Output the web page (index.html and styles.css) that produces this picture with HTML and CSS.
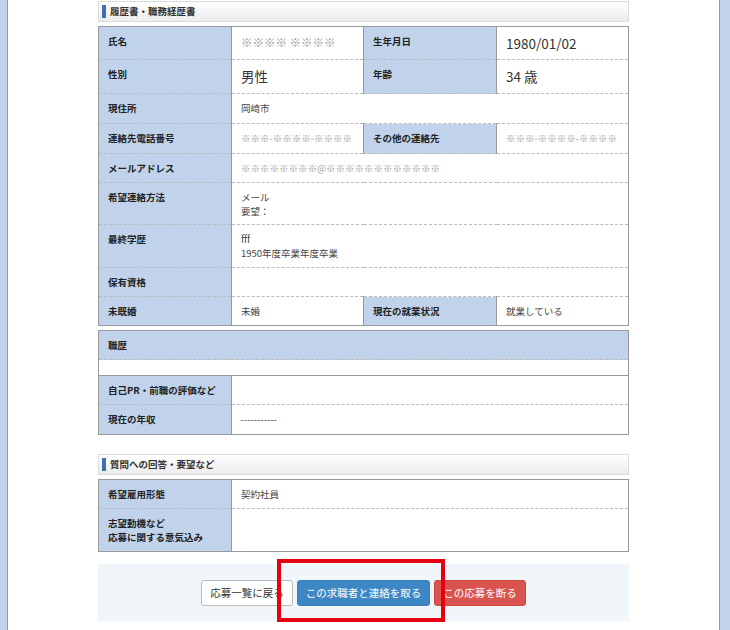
FILE: index.html
```html
<!DOCTYPE html>
<html lang="ja">
<head>
  <meta charset="UTF-8">
  <title>応募者詳細</title>
  <link rel="stylesheet" href="styles.css">
</head>
<body>
  <div class="page">
    <div class="sec-title"><span class="mark"></span>履歴書・職務経歴書</div>

    <table class="info">
      <tr class="h33">
        <th>氏名</th>
        <td class="mask big">※※※※ ※※※※</td>
        <th class="side">生年月日</th>
        <td class="large">1980/01/02</td>
      </tr>
      <tr class="h34">
        <th>性別</th>
        <td class="large">男性</td>
        <th class="side">年齢</th>
        <td class="large">34 歳</td>
      </tr>
      <tr class="h30">
        <th>現住所</th>
        <td colspan="3">岡崎市</td>
      </tr>
      <tr class="h30">
        <th>連絡先電話番号</th>
        <td class="mask">※※※-※※※※-※※※※</td>
        <th class="side">その他の連絡先</th>
        <td class="mask">※※※-※※※※-※※※※</td>
      </tr>
      <tr class="h29">
        <th>メールアドレス</th>
        <td colspan="3" class="mask">※※※※※※※※@※※※※※※※※※※※※</td>
      </tr>
      <tr class="h42">
        <th>希望連絡方法</th>
        <td colspan="3">メール<br>要望：</td>
      </tr>
      <tr class="h43">
        <th>最終学歴</th>
        <td colspan="3">fff<br>1950年度卒業年度卒業</td>
      </tr>
      <tr class="h29">
        <th>保有資格</th>
        <td colspan="3"></td>
      </tr>
      <tr class="h29">
        <th>未既婚</th>
        <td>未婚</td>
        <th class="side">現在の就業状況</th>
        <td>就業している</td>
      </tr>
    </table>

    <table class="info career">
      <tr class="h29">
        <th colspan="2" class="full">職歴</th>
      </tr>
      <tr class="h16">
        <td colspan="2" class="blank"></td>
      </tr>
      <tr class="h29">
        <th>自己PR・前職の評価など</th>
        <td class="solid-top"></td>
      </tr>
      <tr class="h30">
        <th>現在の年収</th>
        <td class="wide">-----------</td>
      </tr>
    </table>

    <div class="sec-title second"><span class="mark"></span>質問への回答・要望など</div>

    <table class="info">
      <tr class="h29">
        <th>希望雇用形態</th>
        <td>契約社員</td>
      </tr>
      <tr class="h43">
        <th>志望動機など<br>応募に関する意気込み</th>
        <td></td>
      </tr>
    </table>

    <div class="actions">
      <button class="btn btn-default">応募一覧に戻る</button>
      <button class="btn btn-primary">この求職者と連絡を取る</button>
      <button class="btn btn-danger">この応募を断る</button>
      <div class="highlight"></div>
    </div>
  </div>
</body>
</html>
```

FILE: styles.css
```css
body {
  margin: 0;
  padding: 0;
  background-color: #c0d3ea;
  font-family: "Noto Sans CJK JP", "Noto Sans", sans-serif;
  color: #333;
}
.page {
  margin: 0 10px 0 7px;
  min-height: 630px;
  background: #fff;
  border-left: 1px solid #9a9a9a;
  border-right: 1px solid #9a9a9a;
  padding: 1px 90px 0 90px;
  box-sizing: border-box;
}
.sec-title {
  height: 21px;
  border: 1px solid #dcdcdc;
  background: linear-gradient(to bottom, #ffffff 0%, #ececec 100%);
  font-size: 9.5px;
  font-weight: bold;
  line-height: 21px;
  display: flex;
  align-items: center;
  box-sizing: border-box;
  padding-left: 3px;
  margin-bottom: 4px;
}
.sec-title .mark {
  display: inline-block;
  width: 4px;
  height: 13px;
  background: #3e70b8;
  margin-right: 4px;
}
.sec-title.second {
  margin-top: 19px;
}
.info {
  width: 100%;
  border-collapse: collapse;
  border: 1px solid #999;
  table-layout: fixed;
  font-size: 9.5px;
}
.info th,
.info td {
  padding: 0 9px;
  text-align: left;
  vertical-align: top;
  line-height: 14px;
  border-top: 1px dashed #bbb;
}
.info th {
  width: 114px;
  background: #c0d3ea;
  font-weight: bold;
  color: #222;
  border-right: 1px solid #999;
  padding-top: 7px;
}
.info th.side {
  border-left: 1px solid #999;
}
.info td {
  color: #444;
  background: #fff;
  padding-top: 7px;
}
.info tr:first-child th,
.info tr:first-child td {
  border-top: none;
}
.info td.mask {
  color: #9a9a9a;
}
.info td.big {
  font-size: 11.5px;
  padding-top: 8px;
}
.info td.large {
  font-size: 13.5px;
  padding-top: 7px;
  line-height: 18px;
  color: #333;
}
.info th.full {
  width: auto;
  border-right: none;
  border-bottom: 1px dashed #bbb;
}
.info td.blank {
  border-top: none;
  padding: 0;
}
.info td.solid-top {
  border-top: 1px solid #999;
}
.career {
  margin-top: 4px;
  table-layout: auto;
}
.career td.wide {
  width: 380px;
}
.career tr:nth-child(3) th {
  border-top: 1px solid #999;
}
.h16 { height: 16px; }
.h29 { height: 29px; }
.h30 { height: 30px; }
.h33 { height: 33px; }
.h34 { height: 34px; }
.h42 { height: 42px; }
.h43 { height: 43px; }
.actions {
  position: relative;
  margin-top: 12px;
  height: 57px;
  background: #f1f6fb;
  display: flex;
  justify-content: center;
  align-items: center;
  gap: 4px;
}
.btn {
  height: 26px;
  padding: 0 8px;
  font-family: "Noto Sans CJK JP", sans-serif;
  font-size: 10.5px;
  border-radius: 3px;
  border: 1px solid transparent;
  cursor: pointer;
}
.btn-default {
  background: #fff;
  border-color: #bbb;
  color: #333;
}
.btn-primary {
  background: #3d88c4;
  border-color: #3a7fb8;
  color: #fff;
}
.btn-danger {
  background: #d9534f;
  border-color: #d1463f;
  color: #fff;
}
.highlight {
  position: absolute;
  left: 179px;
  top: -5px;
  width: 160px;
  height: 55px;
  border: 4px solid #e60012;
  pointer-events: none;
}
```
